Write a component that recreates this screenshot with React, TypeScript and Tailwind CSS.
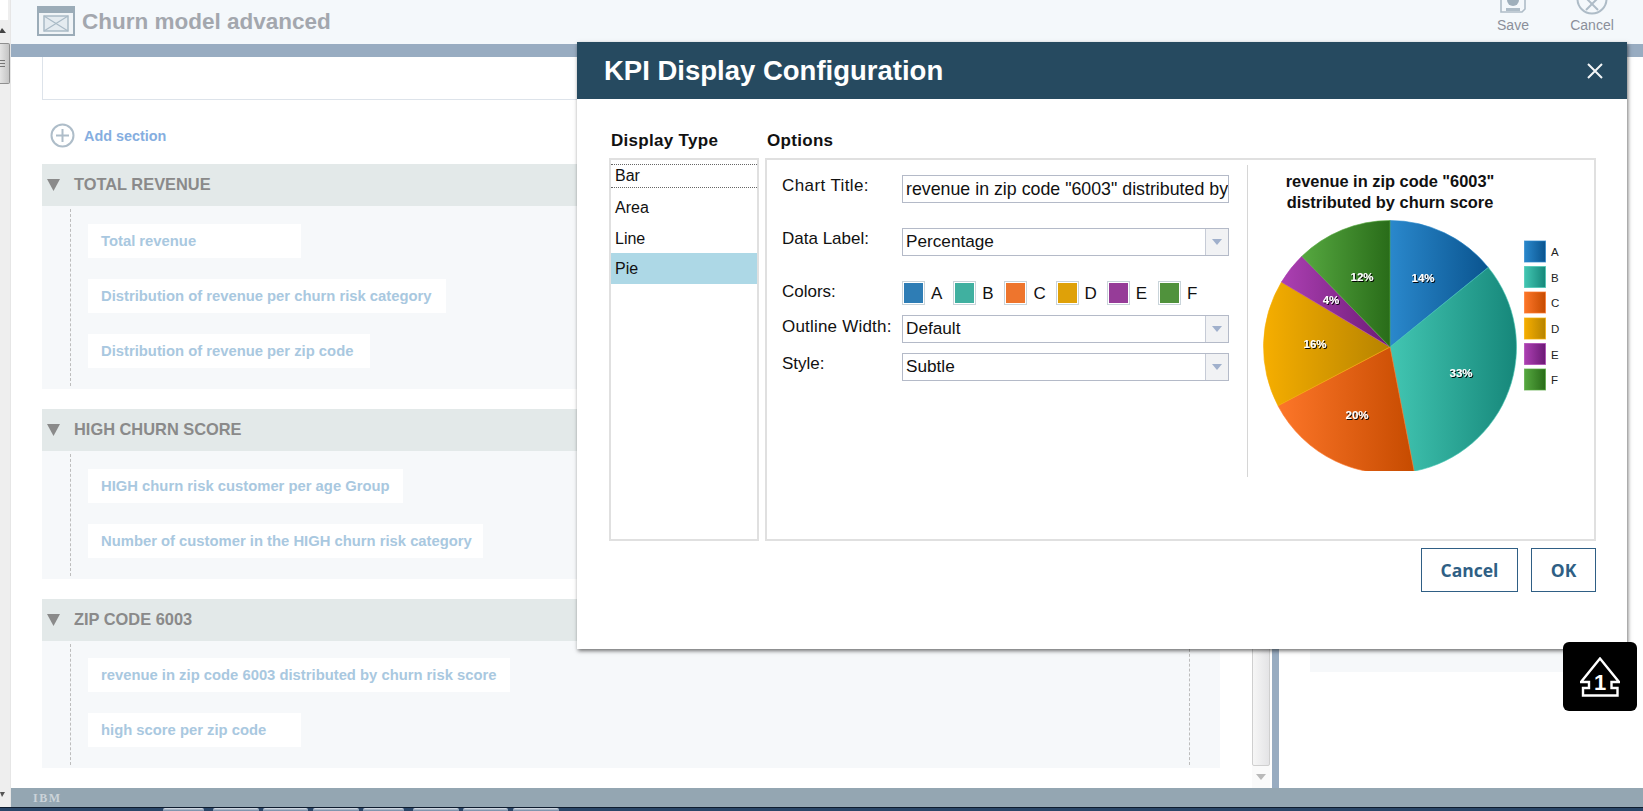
import React from "react";

const sections = [
  {
    title: "TOTAL REVENUE",
    pad: "pt-[15px]",
    items: [
      { label: "Total revenue", width: "w-[213px]" },
      { label: "Distribution of revenue per churn risk category", width: "w-[358px]" },
      { label: "Distribution of revenue per zip code", width: "w-[282px]" },
    ],
  },
  {
    title: "HIGH CHURN SCORE",
    pad: "pt-[15px]",
    items: [
      { label: "HIGH churn risk customer per age Group", width: "w-[315px]" },
      { label: "Number of customer in the HIGH churn risk category", width: "w-[395px]" },
    ],
  },
  {
    title: "ZIP CODE 6003",
    pad: "pt-[14px]",
    items: [
      { label: "revenue in zip code 6003 distributed by churn risk score", width: "w-[422px]" },
      { label: "high score per zip code", width: "w-[213px]" },
    ],
  },
];

const swatches = [
  { name: "A", color: "bg-[#2e7db5]" },
  { name: "B", color: "bg-[#40b0a0]" },
  { name: "C", color: "bg-[#ee752d]" },
  { name: "D", color: "bg-[#dfa108]" },
  { name: "E", color: "bg-[#963c98]" },
  { name: "F", color: "bg-[#50923c]" },
];

const slices = [
  { id: "a", from: 0, to: 51, c1: "#2a88cc", c2: "#0a548f", label: "14%", x: 1423, y: 282 },
  { id: "b", from: 51, to: 169, c1: "#42c6b2", c2: "#16877a", label: "33%", x: 1461, y: 377 },
  { id: "c", from: 169, to: 242.3, c1: "#fd7629", c2: "#c64b00", label: "20%", x: 1357, y: 419 },
  { id: "d", from: 242.3, to: 300.9, c1: "#f6ae00", c2: "#b68300", label: "16%", x: 1315, y: 348 },
  { id: "e", from: 300.9, to: 315.8, c1: "#ac40b2", c2: "#6c1a76", label: "4%", x: 1331, y: 304 },
  { id: "f", from: 315.8, to: 360, c1: "#56a840", c2: "#296c19", label: "12%", x: 1362, y: 281 },
];

const legend = [
  { name: "A", y: 241, c1: "#2a88cc", c2: "#0a548f" },
  { name: "B", y: 266.5, c1: "#42c6b2", c2: "#16877a" },
  { name: "C", y: 292, c1: "#fd7629", c2: "#c64b00" },
  { name: "D", y: 318, c1: "#f6ae00", c2: "#b68300" },
  { name: "E", y: 343.5, c1: "#ac40b2", c2: "#6c1a76" },
  { name: "F", y: 369, c1: "#56a840", c2: "#296c19" },
];

const taskTabs = [
  "w-[41px]",
  "ml-[9px] w-[46px]",
  "ml-[4px] w-[45px]",
  "ml-[5px] w-[46px]",
  "ml-[4px] w-[41px]",
  "ml-[9px] w-[46px]",
  "ml-[4px] w-[45px]",
  "ml-[5px] w-[46px]",
];

// pie slice path, angles are clockwise from 12 o'clock
const slicePath = (from: number, to: number) => {
  const cx = 1390;
  const cy = 347;
  const r = 126.5;
  const pt = (deg: number) => {
    const rad = (deg * Math.PI) / 180;
    return `${cx + r * Math.sin(rad)} ${cy - r * Math.cos(rad)}`;
  };
  return `M${cx} ${cy} L${pt(from)} A${r} ${r} 0 ${to - from > 180 ? 1 : 0} 1 ${pt(to)} Z`;
};

const SelectBox = ({ value }: { value: string }) => (
  <div className="flex h-[28px] w-[327px] border border-[#b4bac8] bg-white">
    <div className="flex-1 pl-[3px] text-[17.2px] leading-[25px] text-[#111]">{value}</div>
    <div className="flex w-[23px] items-center justify-center border-l border-[#c6cbd6] bg-[#f1f2f4]">
      <svg width="10" height="6" viewBox="0 0 10 6">
        <path d="M0 0h10L5 6z" fill="#a0b0cc" />
      </svg>
    </div>
  </div>
);

const PieChart = () => (
  <svg width="345" height="320" viewBox="1248 165 345 320" className="block">
    <defs>
      {slices.map((s) => (
        <linearGradient key={s.id} id={`slice-${s.id}`} x1="0" y1="0" x2="1" y2="0">
          <stop offset="0" stopColor={s.c1} />
          <stop offset="1" stopColor={s.c2} />
        </linearGradient>
      ))}
      {legend.map((l) => (
        <linearGradient key={l.name} id={`legend-${l.name}`} x1="0" y1="0" x2="1" y2="0">
          <stop offset="0" stopColor={l.c1} />
          <stop offset="1" stopColor={l.c2} />
        </linearGradient>
      ))}
      <clipPath id="pie-clip">
        <rect x="1248" y="165" width="345" height="306" />
      </clipPath>
      <filter id="label-shadow" x="-30%" y="-30%" width="170%" height="170%">
        <feDropShadow dx="1" dy="1" stdDeviation="0.7" floodColor="#000" floodOpacity="0.95" />
      </filter>
    </defs>
    <text x="1390" y="187" textAnchor="middle" fontSize="16.4" fontWeight="700" fill="#111">
      revenue in zip code "6003"
    </text>
    <text x="1390" y="208" textAnchor="middle" fontSize="16.4" fontWeight="700" fill="#111">
      distributed by churn score
    </text>
    <g clipPath="url(#pie-clip)">
      {slices.map((s) => (
        <path
          key={s.id}
          d={slicePath(s.from, s.to)}
          fill={`url(#slice-${s.id})`}
          stroke={s.c1}
          strokeOpacity="0.6"
          strokeWidth="1"
        />
      ))}
    </g>
    {slices.map((s) => (
      <text
        key={s.id}
        x={s.x}
        y={s.y}
        textAnchor="middle"
        fontSize="11.5"
        fontWeight="700"
        fill="#fff"
        filter="url(#label-shadow)"
      >
        {s.label}
      </text>
    ))}
    {legend.map((l) => (
      <g key={l.name}>
        <rect x="1524.5" y={l.y} width="21" height="21" fill={`url(#legend-${l.name})`} stroke={l.c1} strokeOpacity="0.7" />
        <text x="1551" y={l.y + 15} fontSize="11.5" fill="#222">
          {l.name}
        </text>
      </g>
    ))}
  </svg>
);

const KpiDialog = () => (
  <div className="absolute left-[577px] top-[42px] h-[607px] w-[1050px] bg-white shadow-[1px_2px_4px_rgba(0,0,0,0.55)]">
    <div className="flex h-[57px] items-center justify-between bg-[#264a60] pl-[27px] pr-[24px] text-white">
      <span className="text-[27.5px] font-bold leading-none">KPI Display Configuration</span>
      <svg width="16" height="16" viewBox="0 0 16 16" className="mt-[1px]">
        <path d="M1 1l14 14M15 1L1 15" stroke="#f4f6f7" strokeWidth="2" fill="none" />
      </svg>
    </div>

    <div className="pl-[32px] pr-[31px] pt-[32px]">
      <div className="flex gap-[6px]">
        <div className="w-[150px] shrink-0">
          <div className="h-[27px] pl-[2px] text-[17px] font-bold leading-[20px] tracking-[0.3px] text-[#111]">Display Type</div>
          <div className="h-[383px] border-2 border-[#e0e0e0] text-[16px] text-[#111]">
            <div className="flex h-[31px] items-center">
              <div className="flex h-[24px] w-full items-center border-y border-dotted border-[#666] pl-[4px] pt-[1px]">Bar</div>
            </div>
            <div className="flex h-[31px] items-center pl-[4px] pt-[2px]">Area</div>
            <div className="flex h-[31px] items-center pl-[4px] pt-[2px]">Line</div>
            <div className="flex h-[31px] items-center bg-[#add8e6] pl-[4px]">Pie</div>
          </div>
        </div>

        <div className="flex-1">
          <div className="h-[27px] pl-[2px] text-[17px] font-bold leading-[20px] tracking-[0.3px] text-[#111]">Options</div>
          <div className="flex h-[383px] border-2 border-[#e0e0e0]">
            <div className="w-[480px] shrink-0 pl-[15px] pt-[15px] text-[17px] text-[#111]">
              <div className="flex h-[28px]">
                <div className="mt-[1px] w-[120px] shrink-0 leading-[20px] tracking-[0.4px]">Chart Title:</div>
                <div className="h-[28px] w-[327px] overflow-hidden whitespace-nowrap border border-[#b4bac8] pl-[3px] text-[17.8px] leading-[26px]">
                  revenue in zip code "6003" distributed by
                </div>
              </div>
              <div className="mt-[25px] flex h-[28px]">
                <div className="mt-[1px] w-[120px] shrink-0 leading-[20px]">Data Label:</div>
                <SelectBox value="Percentage" />
              </div>
              <div className="mt-[25px] flex h-[24px]">
                <div className="mt-[1px] w-[120px] shrink-0 leading-[20px]">Colors:</div>
                <div className="flex">
                  {swatches.map((s) => (
                    <div key={s.name} className="flex w-[51.2px] items-center">
                      <div className="box-border h-[24px] w-[23px] border border-[#c9d4da] p-[1px]">
                        <div className={`h-full w-full ${s.color}`} />
                      </div>
                      <span className="ml-[6px] leading-none">{s.name}</span>
                    </div>
                  ))}
                </div>
              </div>
              <div className="mt-[10px] flex h-[28px]">
                <div className="mt-[2px] w-[120px] shrink-0 whitespace-nowrap leading-[20px] tracking-[0.2px]">Outline Width:</div>
                <SelectBox value="Default" />
              </div>
              <div className="mt-[10px] flex h-[28px]">
                <div className="mt-[1px] w-[120px] shrink-0 leading-[20px]">Style:</div>
                <SelectBox value="Subtle" />
              </div>
            </div>
            <div className="mt-[5px] h-[312px] w-[1px] shrink-0 bg-[#d6d6d6]" />
            <div className="mt-[5px]">
              <PieChart />
            </div>
          </div>
        </div>
      </div>

      <div className="mt-[7px] flex justify-end gap-[13px] text-[17.5px] font-bold text-[#2f5f85] [font-family:'Open_Sans',sans-serif]">
        <button className="h-[44px] w-[97px] border border-[#2f5f85] bg-white">Cancel</button>
        <button className="h-[44px] w-[65px] border border-[#2f5f85] bg-white">OK</button>
      </div>
    </div>
  </div>
);

const App = () => {
  return (
    <div className="relative flex h-[811px] w-[1643px] flex-col overflow-hidden bg-white [font-family:'Liberation_Sans',Arial,sans-serif]">
      <div className="flex h-[807px]">
        {/* browser scrollbar on the far left */}
        <div className="flex w-[11px] shrink-0 flex-col border-r border-[#e6e6e6] bg-[#eeeeee]">
          <div className="h-[20px] w-[8px] bg-white" />
          <svg width="10" height="8" viewBox="0 0 10 8" className="mt-[7px]">
            <path d="M-1 6L2 1 6 6z" fill="#444" />
          </svg>
          <div className="mt-[8px] flex h-[41px] w-[10px] flex-col justify-center gap-[2px] rounded-r-[2px] border border-l-0 border-[#8f8f8f] bg-gradient-to-r from-[#e4e4e4] to-[#c4c4c4]">
            <div className="h-[1px] w-[5px] bg-[#777]" />
            <div className="h-[1px] w-[5px] bg-[#777]" />
            <div className="h-[1px] w-[5px] bg-[#777]" />
          </div>
          <svg width="10" height="6" viewBox="0 0 10 6" className="mt-auto mb-[9px]">
            <path d="M0 0h5L2 5z" fill="#555" />
          </svg>
        </div>

        <div className="flex min-w-0 flex-1 flex-col">
          <div className="flex h-[44px] shrink-0 items-center justify-between bg-[#f4f8fb]">
            <div className="flex items-center pl-[26px]">
              <svg width="38" height="30" viewBox="0 0 38 30" className="mt-[-2px]">
                <rect width="38" height="30" fill="#9bacb8" />
                <rect x="2" y="7" width="34" height="21" fill="#f0f4f7" />
                <rect x="7" y="10" width="24" height="15" fill="#e4ebf0" stroke="#a9bac6" strokeWidth="1.5" />
                <path d="M7 10l24 15M31 10L7 25" stroke="#a9bac6" strokeWidth="1.2" fill="none" />
              </svg>
              <span className="ml-[7px] text-[22.5px] font-bold leading-none text-[#a3a7ae]">Churn model advanced</span>
            </div>
            <div className="flex h-full">
              <div className="flex w-[60px] flex-col items-center">
                <svg width="26" height="13" viewBox="0 0 26 13" className="block">
                  <path d="M1 -6h24v15l-3 3H1z" fill="#f4f8fb" stroke="#aebcc7" strokeWidth="1.6" />
                  <circle cx="13" cy="0" r="6" fill="#9fafbb" />
                  <rect x="6" y="8" width="14" height="3" fill="#aebcc7" />
                </svg>
                <span className="mt-[4px] text-[14px] leading-[16px] text-[#8b8f9a]">Save</span>
              </div>
              <div className="ml-[19px] mr-[21px] flex w-[60px] flex-col items-center">
                <svg width="32" height="15" viewBox="0 0 32 15" className="block">
                  <circle cx="16" cy="-1" r="14.5" fill="none" stroke="#aebcc7" strokeWidth="2" />
                  <path d="M10 -2l12 12M22 -2L10 10" stroke="#aebcc7" strokeWidth="2" fill="none" />
                </svg>
                <span className="mt-[2px] text-[14px] leading-[16px] text-[#8b8f9a]">Cancel</span>
              </div>
            </div>
          </div>
          <div className="h-[13px] shrink-0 bg-[#98acc1]" />

          <div className="flex min-h-0 flex-1">
            <div className="flex w-[1261px] shrink-0">
              <div className="w-[1241px] shrink-0 pl-[31px] pr-[32px]">
                <div className="h-[43px] border-x border-b border-[#dde3ea]" />
                <div className="mt-[23px] flex h-[25px] items-center pl-[8px]">
                  <svg width="25" height="25" viewBox="0 0 25 25">
                    <circle cx="12.5" cy="12.5" r="11" fill="none" stroke="#aebdc9" strokeWidth="2" />
                    <path d="M12.5 6v13M6 12.5h13" stroke="#aebdc9" strokeWidth="2" />
                  </svg>
                  <span className="ml-[9px] pt-[2px] text-[14.4px] font-bold text-[#85aee0]">Add section</span>
                </div>
                <div className="mt-[16px] flex flex-col gap-[20px]">
                  {sections.map((section) => (
                    <div key={section.title} className="bg-[#f6f8fa] pb-[3px]">
                      <div className="flex h-[42px] items-center bg-[#e3e9e9] pl-[5px] text-[#8a8a8a]">
                        <svg width="13" height="12" viewBox="0 0 13 12">
                          <path d="M0 0h13L6.5 12z" fill="#8a8a8a" />
                        </svg>
                        <span className="ml-[14px] pb-[2px] text-[16.4px] font-bold">{section.title}</span>
                      </div>
                      <div className={`ml-[28px] mr-[30px] mt-[3px] border-x border-dashed border-[#bdbdbd] pb-[18px] pl-[17px] ${section.pad}`}>
                        <div className="flex flex-col gap-[21px]">
                          {section.items.map((item) => (
                            <div
                              key={item.label}
                              className={`flex h-[34px] items-center bg-white pl-[13px] text-[14.8px] font-bold text-[#a9c8e0] ${item.width}`}
                            >
                              {item.label}
                            </div>
                          ))}
                        </div>
                      </div>
                    </div>
                  ))}
                </div>
              </div>
              <div className="flex w-[18px] shrink-0 flex-col bg-[#fafafa]">
                <div className="flex-1 rounded-b-[2px] border border-[#cfcfcf] bg-gradient-to-r from-[#f6f6f6] to-[#e4e4e6]" />
                <div className="flex h-[22px] items-center justify-center">
                  <svg width="10" height="6" viewBox="0 0 10 6">
                    <path d="M0 0h10L5 6z" fill="#b9b9b9" />
                  </svg>
                </div>
              </div>
            </div>
            <div className="w-[7px] shrink-0 self-stretch bg-[#98acc1]" />
            <div className="flex-1 pl-[31px]">
              <div className="mt-[40px] h-[575px] w-[290px] bg-[#f6f8fa]" />
            </div>
          </div>

          <div className="flex h-[19px] shrink-0 items-center bg-[#94a6b2] pl-[22px]">
            <span className="text-[12px] font-bold leading-none tracking-[1.5px] text-[#cbd3d9] [font-family:'Liberation_Serif',serif]">IBM</span>
          </div>
        </div>
      </div>

      {/* windows taskbar peeking in at the bottom */}
      <div className="flex h-[4px] shrink-0 items-stretch border-t border-[#0e1c2e] bg-[#2a4668] pl-[163px]">
        {taskTabs.map((w, i) => (
          <div key={i} className={`${w} rounded-t-[2px] bg-gradient-to-b from-[#dfe4ea] to-[#6f87a3]`} />
        ))}
      </div>

      <KpiDialog />

      <div className="absolute left-[1563px] top-[642px] flex h-[69px] w-[74px] items-center justify-center rounded-[6px] bg-black">
        <svg width="40" height="40" viewBox="0 0 40 40">
          <path
            d="M20 1.5L39 25H31.5V31H37.5V38.5H3V31H9V25H1Z"
            fill="none"
            stroke="#fff"
            strokeWidth="2.4"
          />
          <text x="20" y="33" textAnchor="middle" fontSize="22" fontWeight="700" fill="#fff">
            1
          </text>
        </svg>
      </div>
    </div>
  );
};

export default App;
